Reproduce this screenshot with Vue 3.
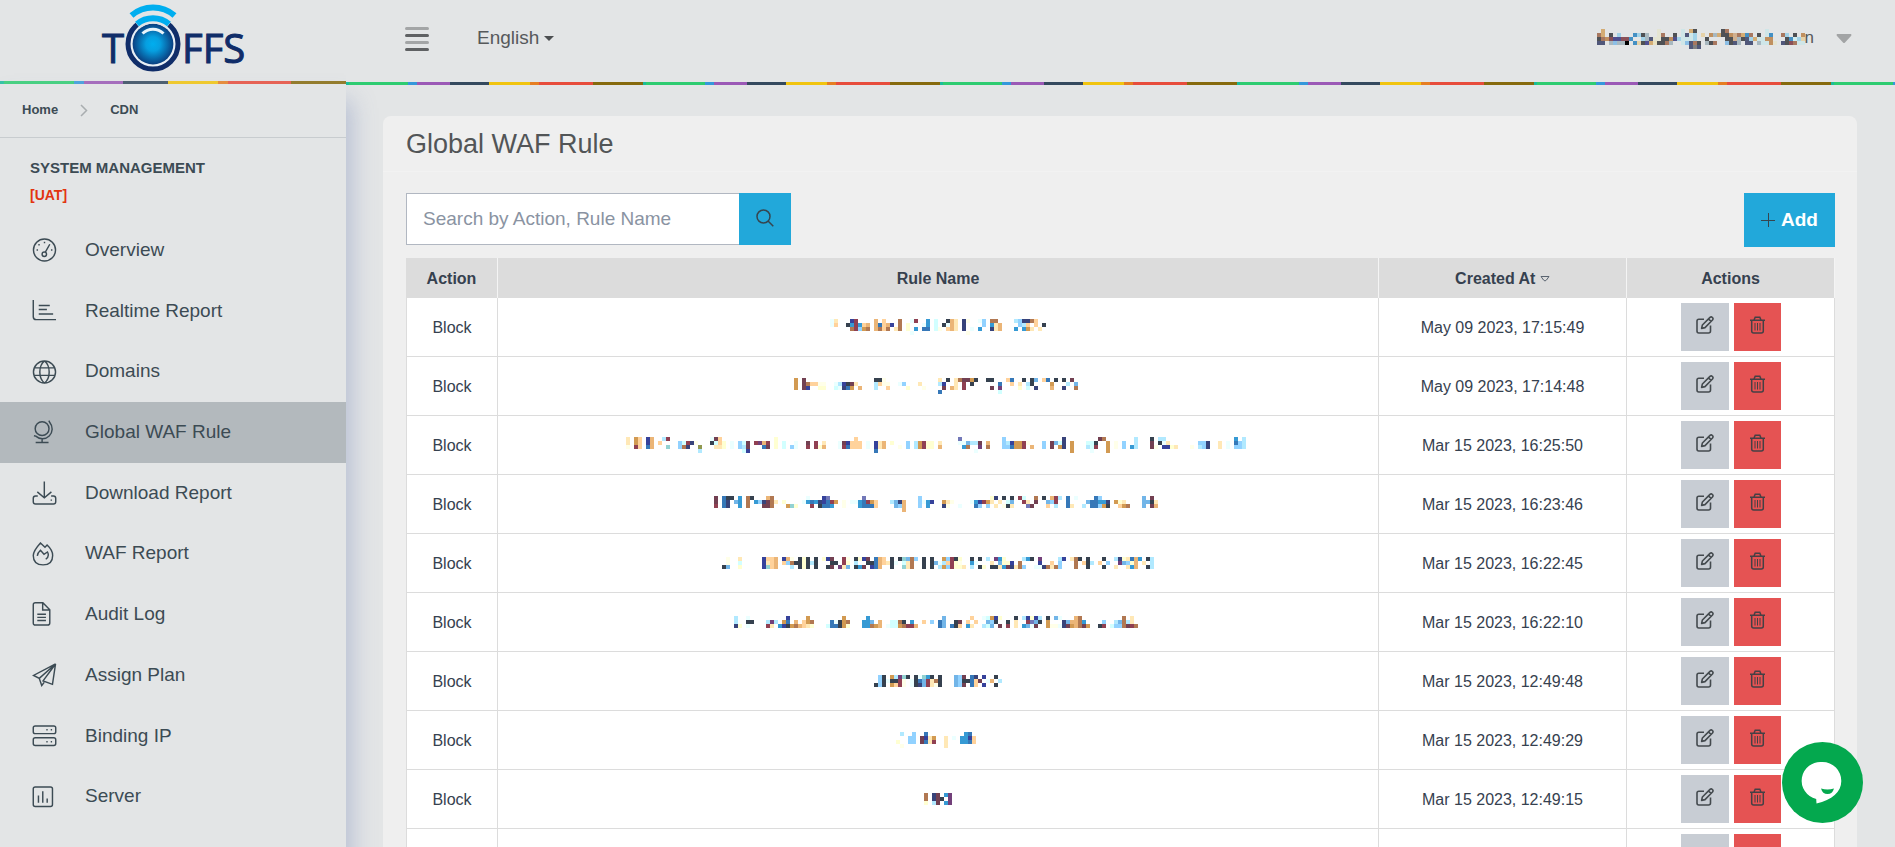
<script setup>
import { ref } from 'vue'

const search = ref('')

const palette = {
  k: '#36414f', n: '#38437a', i: '#36429b', b: '#3678b8', c: '#369ad4', l: '#72b5e8', s: '#92d2ff',
  a: '#b1e9ff', q: '#d2ffff', w: '#ebffff', y: '#ffffd2', v: '#ffffe9', p: '#ffe8b6', o: '#ffd29b',
  g: '#ebb577', d: '#d29a52', r: '#b17852', m: '#904052', u: '#724052', h: '#72407a', t: '#92d2d2',
  x: '#7278b8', e: '#90984f'
}
const mutedPalette = {
  k: '#4f5155', n: '#50577a', i: '#50508c', b: '#4490c4', l: '#8cbfe6', s: '#a2d2e8', a: '#a8b8c0',
  t: '#cfe6e8', q: '#d2ecee', v: '#e4e4d2', y: '#e8e0c0', p: '#e6d2a8', g: '#d4ac74', o: '#c09060',
  r: '#a87860', m: '#8a5058', u: '#505090', x: '#d0b090', h: '#808080'
}

// Each line is a list of runs: start column followed by one colour key per cell.
function cells(lines, colours) {
  const out = []
  lines.forEach((line, y) => {
    line.split(' ').forEach((run) => {
      const m = /^(\d+)([a-z]+)$/.exec(run)
      if (!m) return
      ;[...m[2]].forEach((key, k) => out.push({ x: (Number(m[1]) + k) * 4, y: y * 4, fill: colours[key] }))
    })
  })
  return out
}

const rows = [
  { action: 'Block', date: 'May 09 2023, 17:15:49', cols: 54, lines: [
    '0wp 5im 11g 13o 17r 20wm 24c 26q 29kg 31p 33nv 37ws 40rr 46asnnro',
    '0wo 4kcmcog 11gbogi 17r 19y 23wc 26q 28kwgp 33n 38s 40cpg 47sao 51o 53k',
    '5rmsdr 11gror 16pr 19y 21c 23bb 26qv 29ogp 33n 35w 37c 40npg 46c 48cdp 52p 54q',
    '20w 34v'] },
  { action: 'Block', date: 'May 09 2023, 17:14:48', cols: 72, lines: [
    '0d 2u 20kkv 36p 38k 40pruudk 48kk 53ob 57k 59kl 62ob 65k 67k 69u',
    '0d 2uroovv 10waikup 20aovv 26ws 31p 36ai 40p 42m 44k 51b 54o 56p 58ak 64d 68a 70l',
    '0d 2ui 6yy 10qwnbd 16g 20a 23o 28y 32v 37u 39gp 42m 49u 51h 56y 58q 60n 64g 67n 70r',
    '36b 51q'] },
  { action: 'Block', date: 'Mar 15 2023, 16:25:50', cols: 156, lines: [
    '0p 2do 5ig 9am 21wuo 37y 57o 83x 94s 109n 118ur 127a 131k 133aa 152c 154a',
    '0p 2do 5ig 8o 13sqmnv 21kqoy 26w 28squ 32mhgm 37y 39q 42w 45u 47m 49p 53wuiooo 60w 62ipg 66y 70s 72admy 76y 78p 83wwlaau 90g 94saiddmv 104s 106ulqn 111d 115qqk 120d 122v 124s 127a 131u 133kwp 143ssn 148p 150w 152bsa',
    '0v 2mo 5bg 10t 13srn 18e 22ppy 26w 28sau 34bu 37y 39q 41sw 45m 47myg 53wmbooo 60w 62ipg 68v 70s 72admyy 78g 84cr 88h 90r 94ssbddm 101g 104s 106u 108dn 111d 115aqm 120d 122v 124s 126ca 131uv 134iiyp 141v 143asn 148p 150w 152ssa',
    '18a 29qi 62b 87w 111d 116w 120d'] },
  { action: 'Block', date: 'Mar 15 2023, 16:23:46', cols: 112, lines: [
    '0u 2bkk 6c 8rk 13gr 23w 27ix 37x 51s 69yn 72k 74k 76mq 80r 82k 84gma 88b 90w 95bs 107l 109u',
    '0u 2bn 5lc 8r 10csnurp 17y 22wcbcnibmd 32v 34wwcbmdo 44alng 51swci 57dpv 64wcimdp 71p 73ql 77mp 80u 83lsm 88b 93lbbccn 100dyp 107llkp',
    '0m 2bn 6c 8r 12uur 18dty 24m 26kbbc 32v 36cbbbo 45lsg 51s 53c 57nv 61w 65bs 68s 70p 72vkp 78xu 83o 85a 88bp 92a 94bbsdk 101odr 107l 109ug',
    '47g'] },
  { action: 'Block', date: 'Mar 15 2023, 16:22:45', cols: 108, lines: [
    '1v 4p 10ioog 15igv 19kyk 23k 25yiu 30mv 33kyiu 38bgo 42k 44ktlrs 50k 52k 55dsmky 62k 64k 66a 68hcy 75ack 79h 84ai 87prk 91k 95k 98anypbgc 106ka',
    '1v 4q 10ipog 15osrkkykak 27kk 30my 33a 36kkbgop 42kw 45qpr 50k 52klwaomyv 62cw 67p 69lyy 72i 74r 79i 82o 84s 88r 90oka 94o 96s 99hlsyg 105p 107a',
    '0kl 4y 10itog 17a 19kyk 23k 26ku 29hpl 33kcu 37ibg 42k 45tpr 50k 52k 54adsmyyp 62a 64ky 67kkpcunpr 75s 78wwnrprs 88r 91k 95k 98p 101pcg 106ka'] },
  { action: 'Block', date: 'Mar 15 2023, 16:22:10', cols: 102, lines: [
    '0a 3w 13i 18d 27d 33c 52l 59o 62wqdiy 70k 72aiyia 78k 80lw 85gr 97r 99p',
    '0a 3kk 8aha 12db 15g 17odr 24bwkdr 32ccl 36g 39qqrk 44c 47o 49s 51bl 55ku 58o 60o 63lsk 68k 70p 73mxlk 78d 82nlggrc 92s 95alrap',
    '0ny 3w 8mp 11cikdrgopy 23qbbkdy 32ccrdg 38wqqdrmmg 51bl 54bko 58cp 62aql 66u 68m 70p 72clwu 78dvvwnudgrud 91km 94qssrumr'] },
  { action: 'Block', date: 'Mar 15 2023, 12:49:48', cols: 32, lines: [
    '1sk 4dahtk 10kwtck 16k 20lsu 24bn 27i 30k',
    '1skwkkmv 9wkblmprk 20lskkbou 28w 29g 31a',
    '0ksk 4domv 9wknlmpvk 20lsu 24bo 27i 30k'] },
  { action: 'Block', date: 'Mar 15 2023, 12:49:29', cols: 21, lines: [
    '1a 4s 7b 17cb', '3ss 6uipd 12p 14w 16ccio', '0y 3ss 6ubpm 12p 16ccbo', '1v 12p'] },
  { action: 'Block', date: 'Mar 15 2023, 12:49:15', cols: 7, lines: ['0r 2nu 5ch', '0r 2nuk 6h', '0y 2au 5ch'] },
  { action: '', date: '', cols: 7, lines: [] }
].map((r) => ({ ...r, rule: cells(r.lines, palette), height: r.lines.length === 4 ? 16 : 12 }))

const account = cells([
  '1g 15v 21t 23gk 31kr 42t',
  '0rg 3k 5s 9bska 15vr 19k 21tnts 26p 28oagkkoxrgbr 40k 42tb 46rs 49k 51o',
  '0kromuummb 11sanvvkk 18ois 21ttts 27k 32kkxakns 39gttoo 47kbqsp',
  '0nn 3ala 6aw 9bpkugykkra 21tlnrk 27akr 32lkna 37nn 40attov 46nkmrtt',
  '23nhn'
], mutedPalette)

const menu = [
  { label: 'Overview', icon: 'M12.5 1a11.5 11.5 0 1 0 0 23a11.5 11.5 0 1 0 0-23M12.3 14.6a2.3 2.3 0 1 0 0 4.6a2.3 2.3 0 1 0 0-4.6M13.4 14.8L18 6.5M6.8 6.3v1.4M12.5 4v1.4M5 11.8v1.4M20 11.8v1.4' },
  { label: 'Realtime Report', icon: 'M.8 1v17.5q0 3 3 3H24.5M6.5 6.7H18M6.5 11H15M6.5 15.7H21.5' },
  { label: 'Domains', icon: 'M12.5 1a11.5 11.5 0 1 0 0 23a11.5 11.5 0 1 0 0-23M12.5 1C6 6 6 19 12.5 24C19 19 19 6 12.5 1M1.8 8.2H23.2M1.8 16H23.2' },
  { label: 'Global WAF Rule', active: true, icon: 'M10 1.800a7.200 7.200 0 1 0 0 14.400a7.200 7.200 0 1 0 0-14.400M17 .6L18 2.600A10.200 10.200 0 0 1 3.400 16.800L1.500 16.400M10 19.200V23.500M3.300 23.500H16.700' },
  { label: 'Download Report', icon: 'M12.3 .5V17M5 11.3L12.3 17.4L19.7 11.3M5.5 15.6H3.2Q.8 15.6 .8 18V21.6Q.8 24 3.2 24H21.8Q24.2 24 24.2 21.6V18Q24.2 15.6 21.8 15.6H19.4M19.6 19.2V20.6' },
  { label: 'WAF Report', icon: 'M8.3 1L13 5.5L15.2 3.2Q21 8.5 21 14Q21 23.8 11 23.8Q.8 23.8 .8 14Q1 9 8.3 1ZM5 14.5Q5.5 11 8.3 8.6L12 12.8L15.6 10.4Q18 15 13.8 18' },
  { label: 'Audit Log', icon: 'M3 .8H10.8L18 8.2V21.8Q18 24 15.8 24H3Q.8 24 .8 21.8V3Q.8 .8 3 .8M10.6 1V8.4H18M5 12.8H14M5 16H14M5 19.2H14' },
  { label: 'Assign Plan', icon: 'M24 1L1 13L7 16L9.6 23.5L12.2 20.2M24 1L20.8 22.2L11 18.6ZM24 1L7 16' },
  { label: 'Binding IP', icon: 'M2.8 2H22.2Q24.2 2 24.2 4V8Q24.2 10 22.2 10H2.8Q.8 10 .8 8V4Q.8 2 2.8 2M2.8 14.4H22.2Q24.2 14.4 24.2 16.4V20.4Q24.2 22.4 22.2 22.4H2.8Q.8 22.4 .8 20.4V16.4Q.8 14.4 2.8 14.4M14.4 6h1.4M19 6h1.4M14.4 18.4h1.4M19 18.4h1.4' },
  { label: 'Server', icon: 'M2.8 2H18.8Q20.8 2 20.8 4V20.4Q20.8 22.4 18.8 22.4H2.8Q.8 22.4 .8 20.4V4Q.8 2 2.8 2M6.2 11V18.5M10.7 6.5V18.5M15.3 14V18.5' }
]
</script>

<template>
  <div class="app">
    <aside class="sidebar">
      <a class="brand" href="#" aria-label="TOFFS">
        <svg class="logo" width="160" height="80" viewBox="93 0 160 80">
          <defs>
            <radialGradient id="ball">
              <stop offset="0" stop-color="#00aeef" />
              <stop offset=".35" stop-color="#069fe0" />
              <stop offset="1" stop-color="#0a3f80" />
            </radialGradient>
          </defs>
          <text class="logo-text" x="102" y="63">T</text>
          <text class="logo-text" x="182" y="63">FFS</text>
          <ellipse cx="153" cy="44" rx="25" ry="25" fill="#e8eff5" stroke="#102d69" stroke-width="5" />
          <circle cx="153" cy="44" r="20.4" fill="url(#ball)" />
          <path d="M137 24.500A27 27 0 0 1 169 24.500" fill="none" stroke="#e3e5e6" stroke-width="9" />
          <path d="M137 24A25 25 0 0 1 169 24" fill="none" stroke="#00aeef" stroke-width="6" />
          <path d="M131.500 15.500A33 33 0 0 1 174.500 15.500" fill="none" stroke="#00aeef" stroke-width="6" />
          <path d="M142.500 33.500A15 15 0 0 1 163.500 33.500" fill="none" stroke="#e8f4fb" stroke-width="3" />
        </svg>
      </a>
      <div class="rainbow rainbow-side"></div>
      <div class="side-body">
        <nav class="crumbs" aria-label="Breadcrumb">
          <a href="#">Home</a>
          <svg width="8" height="13" viewBox="0 0 8 13" fill="none" stroke="#a9adb0" stroke-width="1.500"><path d="M1 1L6.500 6.500L1 12" /></svg>
          <a href="#">CDN</a>
        </nav>
        <h2 class="side-title">SYSTEM MANAGEMENT</h2>
        <p class="side-env">[UAT]</p>
        <ul class="menu">
          <li v-for="item in menu" :key="item.label">
            <a href="#" class="menu-link" :class="{ active: item.active }">
              <svg class="menu-icon" width="25" height="25" viewBox="0 0 25 25"><path :d="item.icon" /></svg>
              <span>{{ item.label }}</span>
            </a>
          </li>
        </ul>
      </div>
    </aside>

    <div class="main">
      <header class="topbar">
        <button class="burger" type="button" aria-label="Toggle menu"><i></i><i></i><i></i><i></i></button>
        <button class="language" type="button">English<span class="caret"></span></button>
        <button class="account" type="button" aria-label="Account">
          <svg class="account-mosaic" width="208" height="20" viewBox="0 0 208 20" shape-rendering="crispEdges">
            <rect v-for="(c, k) in account" :key="k" :x="c.x" :y="c.y" width="4" height="4" :fill="c.fill" />
          </svg>
          <span class="account-tail">n</span>
          <svg width="16" height="10" viewBox="0 0 16 10"><path d="M1 0H15Q16 1 15 2L9 8.500Q8 9.500 7 8.500L1 2Q0 1 1 0Z" fill="#a2a4a5" /></svg>
        </button>
      </header>
      <div class="rainbow rainbow-main"></div>

      <main class="content">
        <section class="card">
          <h1>Global WAF Rule</h1>
          <div class="card-body">
            <div class="toolbar">
              <form class="search" @submit.prevent>
                <input v-model="search" type="text" aria-label="Search" placeholder="Search by Action, Rule Name" />
                <button type="submit" aria-label="Search">
                  <svg width="18" height="18" viewBox="0 0 18 18" fill="none" stroke="#36454f" stroke-width="1.500"><circle cx="7.500" cy="7.500" r="6.500" /><path d="M12 12L17.300 17.300" /></svg>
                </button>
              </form>
              <button class="add" type="button">
                <svg width="14" height="14" viewBox="0 0 14 14" stroke="#36454f" stroke-width="1"><path d="M0 7.500H14M7.500 0V14" /></svg>
                Add
              </button>
            </div>
            <table>
              <colgroup>
                <col class="col-action" />
                <col />
                <col class="col-date" />
                <col class="col-tools" />
              </colgroup>
              <thead>
                <tr>
                  <th>Action</th>
                  <th>Rule Name</th>
                  <th>Created At <svg class="sort" width="10" height="6" viewBox="0 0 10 6" fill="none" stroke="#5a6470"><path d="M1 .5H9L6.500 4Q5 6 3.500 4Z" /></svg></th>
                  <th>Actions</th>
                </tr>
              </thead>
              <tbody>
                <tr v-for="(row, r) in rows" :key="r">
                  <td class="label">{{ row.action }}</td>
                  <td>
                    <svg class="mosaic" :width="row.cols * 4" :height="row.height" :viewBox="`0 0 ${row.cols * 4} ${row.height}`" shape-rendering="crispEdges">
                      <rect v-for="(c, k) in row.rule" :key="k" :x="c.x" :y="c.y" width="4" height="4" :fill="c.fill" />
                    </svg>
                  </td>
                  <td class="label">{{ row.date }}</td>
                  <td>
                    <div class="tools">
                      <button class="tool" type="button" aria-label="Edit">
                        <svg width="18" height="18" viewBox="0 0 18 18" fill="none" stroke="#444a4e" stroke-width="1.600" stroke-linejoin="round"><path d="M8 3.200H2.800Q1 3.200 1 5V15Q1 17 2.800 17H12.500Q14.500 17 14.500 15V9.500M5.600 12.400L6.400 9L14 1.400Q15.200 .4 16.400 1.500T16.500 4L9 11.600ZM12.600 3L15 5.400" /></svg>
                      </button>
                      <button class="tool danger" type="button" aria-label="Delete">
                        <svg width="15" height="18" viewBox="0 0 15 18" fill="none" stroke="#444045" stroke-width="1.500"><path d="M0 4.200H15M1.700 4.500V15Q1.700 17 3.700 17H11.300Q13.300 17 13.300 15V4.500M4 4L5.200 1.200H9.800L11 4" /><path d="M5 7V14.500M7.500 7V14.500M10 7V14.500" stroke-width="1" /></svg>
                      </button>
                    </div>
                  </td>
                </tr>
              </tbody>
            </table>
          </div>
        </section>
      </main>
    </div>

    <button class="chat" type="button" aria-label="Open chat">
      <svg width="81" height="81" viewBox="0 0 81 81">
        <circle cx="40.500" cy="40.500" r="40.500" fill="#04a84e" />
        <path d="M40.500 20A18.800 18.800 0 0 1 59.300 39C59.300 50 50 58 34.500 61.500L34.200 57A18.800 18.800 0 0 1 40.500 20Z" fill="#fff" />
        <path d="M39 46.500Q45.500 48.500 52 46.500Q50.500 52 45.500 52Q40.500 52 39 46.500Z" fill="#04a84e" />
      </svg>
    </button>
  </div>
</template>

<style>
body {
  margin: 0;
  background: #e3e5e6;
}
</style>

<style scoped>
.app {
  display: grid;
  grid-template-columns: 346px minmax(0, 1fr);
  height: 100vh;
  overflow: hidden;
  background: #e3e5e6;
  color: #3c4b54;
  font: 19px/1.3 "Liberation Sans", Arial, sans-serif;
}
button {
  border: 0;
  padding: 0;
  background: none;
  color: inherit;
  font: inherit;
  cursor: pointer;
}
a {
  color: inherit;
  text-decoration: none;
}
.sidebar {
  display: flex;
  flex-direction: column;
}
.brand {
  display: flex;
  justify-content: center;
  height: 81px;
}
.logo {
  display: block;
  overflow: visible;
}
.logo-text {
  font: 40px "Open Sans", sans-serif;
  fill: #102d69;
  stroke: #102d69;
  stroke-width: 1;
}
.rainbow {
  height: 3px;
  flex-shrink: 0;
}
.rainbow-side {
  opacity: 0.85;
  background: linear-gradient(to right, #1abc9c 4px, #2ecc71 4px 74px, #3498db 74px 84px, #9b59b6 84px 123px, #34495e 123px 168px, #f1c40f 168px 218px, #e67e22 218px 228px, #e74c3c 228px 291px, #866a0d 291px);
}
.rainbow-main {
  position: relative;
  background: repeating-linear-gradient(to right, #1abc9c 0 3px, #2ecc71 3px 62px, #3498db 62px 71px, #9b59b6 71px 104px, #34495e 104px 143px, #f1c40f 143px 184px, #e67e22 184px 193px, #e74c3c 193px 247px, #866a0d 247px 297px);
}
.side-body {
  flex: 1;
  background: #e3e5e6;
  box-shadow: 6px 16px 22px rgba(100, 120, 175, 0.34);
}
.crumbs {
  display: flex;
  align-items: center;
  gap: 22px;
  height: 53px;
  box-sizing: border-box;
  padding: 0 22px;
  font-size: 13px;
  font-weight: bold;
  color: #3c4b54;
}
.side-title {
  margin: 0;
  border-top: 1px solid #c8cccf;
  padding: 20px 30px 0;
  font-size: 15px;
  line-height: 20px;
}
.side-env {
  margin: 0;
  padding: 7px 30px 15px;
  font-size: 14px;
  font-weight: bold;
  line-height: 20px;
  color: #e2340f;
}
.menu {
  margin: 0;
  padding: 0;
  list-style: none;
}
.menu-link {
  display: flex;
  align-items: center;
  gap: 28px;
  padding: 18px 32px;
}
.menu-link.active {
  background: #b3b9bd;
}
.menu-icon {
  height: 24px;
  fill: none;
  stroke: currentColor;
  stroke-width: 1.5;
}
.main {
  display: flex;
  flex-direction: column;
  min-width: 0;
}
.topbar {
  position: relative;
  display: flex;
  align-items: center;
  height: 82px;
  flex-shrink: 0;
  box-sizing: border-box;
  padding: 0 43px 5px 59px;
  background: #e3e5e6;
  color: #56595b;
}
.burger {
  display: grid;
  gap: 4px;
  width: 24px;
  margin-right: 48px;
}
.burger i {
  height: 3px;
  border-radius: 2px;
  background: #5f6163;
}
.burger i:nth-child(odd) {
  background: #a3a5a6;
}
.language {
  display: flex;
  align-items: center;
  gap: 5px;
}
.caret {
  border: 5px solid transparent;
  border-top-color: #4c4f51;
  border-bottom: 0;
}
.account {
  display: flex;
  align-items: center;
  margin-left: auto;
}
.account-tail {
  margin-right: 22px;
  font-size: 17px;
}
.content {
  flex: 1;
  min-height: 0;
  padding: 31px 38px 0 37px;
}
.card {
  border-radius: 8px;
  background: #efefef;
  position: relative;
}
h1 {
  margin: 0;
  padding: 11px 23px 9px;
  border-bottom: 1px solid #f2f2f2;
  font-size: 27px;
  font-weight: normal;
  line-height: 35px;
  color: #525557;
}
.card-body {
  padding: 21px 22px 0 23px;
}
.toolbar {
  display: flex;
  justify-content: space-between;
  align-items: flex-start;
  margin-bottom: 11px;
}
.search {
  display: flex;
  height: 52px;
}
.search input {
  width: 333px;
  box-sizing: border-box;
  border: 1px solid #b1b7c1;
  border-right: 0;
  padding: 0 16px;
  background: #fff;
  color: #3c4b54;
  font: inherit;
}
.search input::placeholder {
  color: #8a93a2;
  opacity: 1;
}
.search button {
  display: grid;
  place-items: center;
  width: 52px;
  padding-bottom: 3px;
  background: #22a8da;
}
.add {
  display: flex;
  align-items: center;
  justify-content: center;
  gap: 6px;
  width: 91px;
  height: 54px;
  background: #22a8da;
  color: #fff;
  font-weight: bold;
}
table {
  width: 100%;
  table-layout: fixed;
  border-spacing: 0;
  border-collapse: separate;
  font-size: 16px;
  line-height: 20px;
  color: #36414f;
  text-align: center;
}
.col-action {
  width: 92px;
}
.col-date {
  width: 248px;
}
.col-tools {
  width: 208px;
}
th {
  height: 40px;
  box-sizing: border-box;
  padding: 2px 0 0;
  border-right: 1px solid #f4f4f4;
  background: #dcdcdc;
}
.sort {
  vertical-align: 2px;
}
td {
  height: 59px;
  box-sizing: border-box;
  padding: 5px 0;
  border-right: 1px solid #dcdcdc;
  border-bottom: 1px solid #dcdcdc;
  background: #fff;
}
td.label {
  padding-top: 7px;
}
td:first-child {
  border-left: 1px solid #dcdcdc;
}
.mosaic {
  display: block;
  margin: 0 auto;
}
.tools {
  display: flex;
  justify-content: center;
  gap: 5px;
}
.tool {
  display: grid;
  place-items: center;
  width: 48px;
  height: 48px;
  padding-bottom: 4px;
  background: #c8cdd4;
}
.tool.danger {
  width: 47px;
  background: #e55353;
}
.chat {
  position: fixed;
  right: 32px;
  bottom: 24px;
  line-height: 0;
}
</style>
